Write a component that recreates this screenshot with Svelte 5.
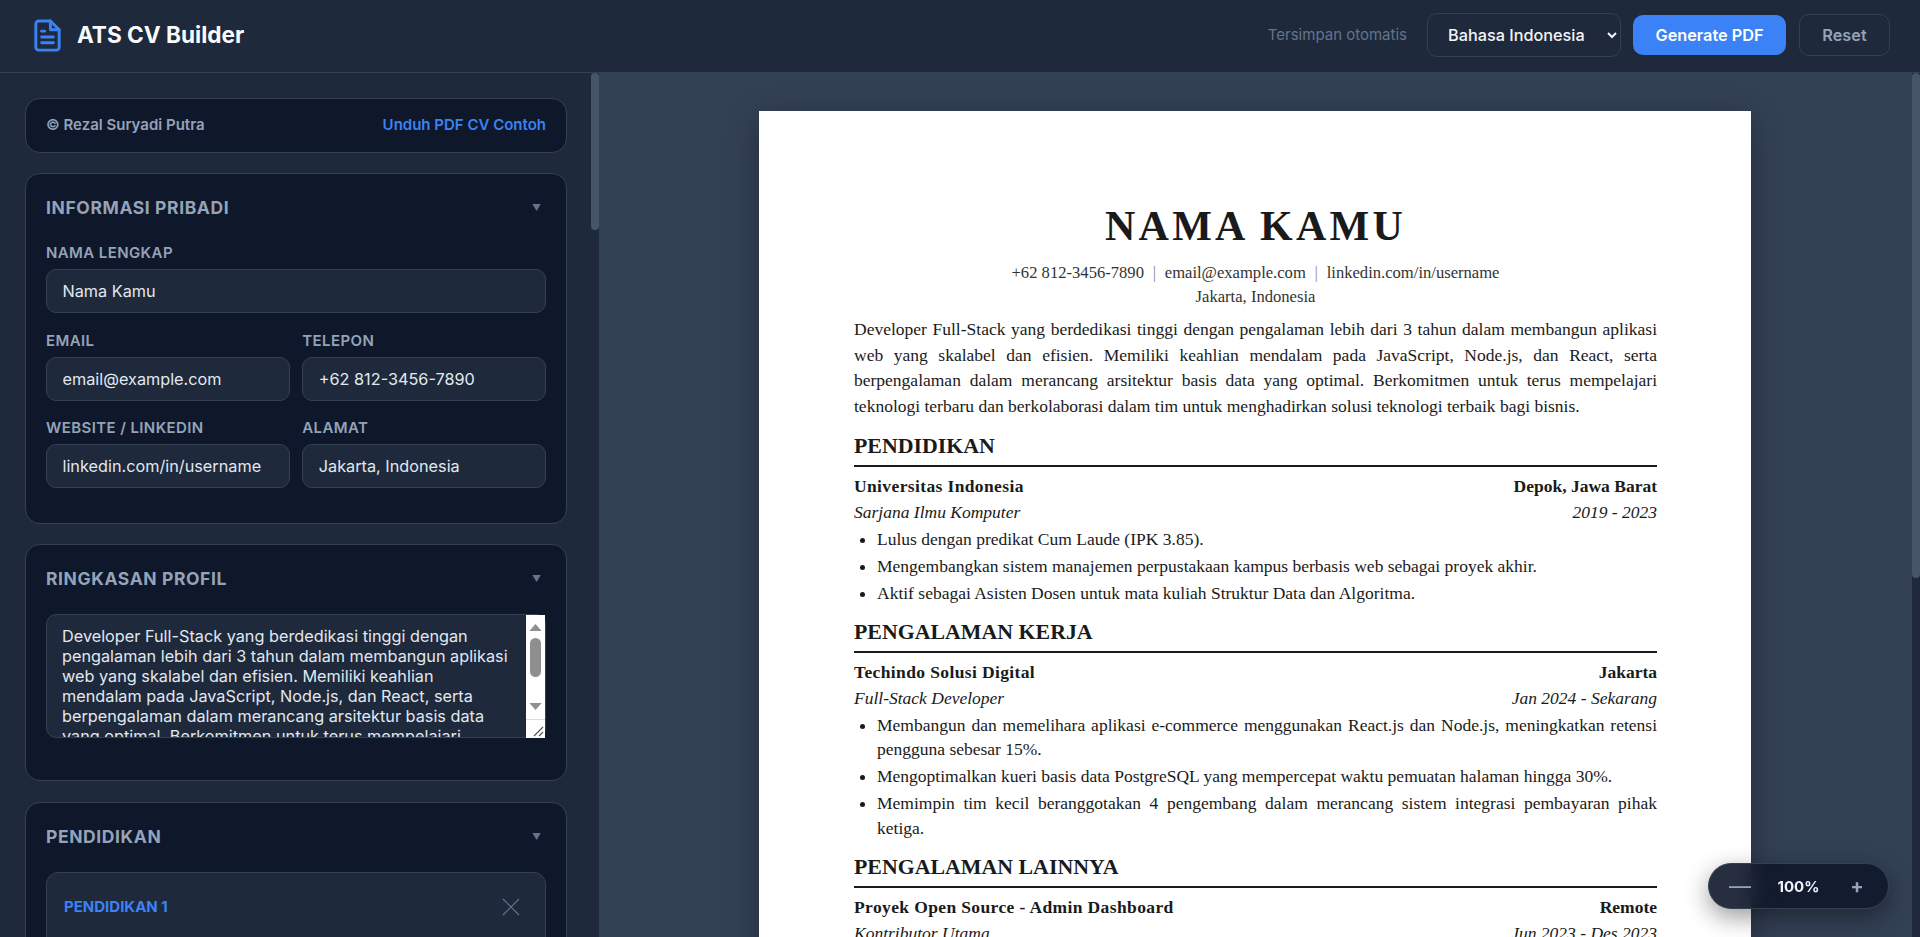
<script>
  const summary =
    'Developer Full-Stack yang berdedikasi tinggi dengan pengalaman lebih dari 3 tahun dalam membangun aplikasi web yang skalabel dan efisien. Memiliki keahlian mendalam pada JavaScript, Node.js, dan React, serta berpengalaman dalam merancang arsitektur basis data yang optimal. Berkomitmen untuk terus mempelajari teknologi terbaru dan berkolaborasi dalam tim untuk menghadirkan solusi teknologi terbaik bagi bisnis.';

  let zoom = $state(100);
  let sideEl = $state();
  let mainEl = $state();
  let sideTop = $state(0);
  let mainTop = $state(0);

  // the page draws its own scrollbars, thumb follows the scroll position
  function thumbStyle(el, top) {
    if (!el) return '';
    const h = el.clientHeight;
    const size = (h * h) / el.scrollHeight;
    return `height: ${size}px; transform: translateY(${(top * h) / el.scrollHeight}px)`;
  }

  const education = [
    {
      title: 'Universitas Indonesia',
      place: 'Depok, Jawa Barat',
      role: 'Sarjana Ilmu Komputer',
      date: '2019 - 2023',
      points: [
        'Lulus dengan predikat Cum Laude (IPK 3.85).',
        'Mengembangkan sistem manajemen perpustakaan kampus berbasis web sebagai proyek akhir.',
        'Aktif sebagai Asisten Dosen untuk mata kuliah Struktur Data dan Algoritma.'
      ]
    }
  ];

  const work = [
    {
      title: 'Techindo Solusi Digital',
      place: 'Jakarta',
      role: 'Full-Stack Developer',
      date: 'Jan 2024 - Sekarang',
      points: [
        'Membangun dan memelihara aplikasi e-commerce menggunakan React.js dan Node.js, meningkatkan retensi pengguna sebesar 15%.',
        'Mengoptimalkan kueri basis data PostgreSQL yang mempercepat waktu pemuatan halaman hingga 30%.',
        'Memimpin tim kecil beranggotakan 4 pengembang dalam merancang sistem integrasi pembayaran pihak ketiga.'
      ]
    }
  ];

  const other = [
    {
      title: 'Proyek Open Source - Admin Dashboard',
      place: 'Remote',
      role: 'Kontributor Utama',
      date: 'Jun 2023 - Des 2023',
      points: [
        'Mengembangkan komponen antarmuka yang digunakan ulang oleh lebih dari 200 pengembang.',
        'Menulis dokumentasi teknis dan panduan kontribusi proyek.'
      ]
    }
  ];

  const sections = [
    { name: 'Pendidikan', items: education },
    { name: 'Pengalaman Kerja', items: work },
    { name: 'Pengalaman Lainnya', items: other }
  ];

  const formSections = [
    { name: 'Pendidikan', unit: 'Pendidikan', items: education },
    { name: 'Pengalaman Kerja', unit: 'Pengalaman', items: work },
    { name: 'Pengalaman Lainnya', unit: 'Kegiatan', items: other }
  ];
</script>

<div class="app">
  <header class="topbar">
    <div class="brand">
      <svg class="logo" viewBox="0 0 24 24" fill="none" stroke="currentColor" stroke-width="2" stroke-linecap="round" stroke-linejoin="round">
        <path d="M14 2H6a2 2 0 0 0-2 2v16a2 2 0 0 0 2 2h12a2 2 0 0 0 2-2V8z" />
        <path d="M14 2v6h6" />
        <path d="M16 13H8" />
        <path d="M16 17H8" />
        <path d="M10 9H8" />
      </svg>
      <h1>ATS CV Builder</h1>
    </div>
    <div class="actions">
      <span class="saved">Tersimpan otomatis</span>
      <select class="lang">
        <option>Bahasa Indonesia</option>
        <option>English</option>
      </select>
      <button type="button" class="btn-primary">Generate PDF</button>
      <button type="button" class="btn-ghost">Reset</button>
    </div>
  </header>

  <div class="workspace">
    <div class="pane side-pane">
      <aside class="sidebar" bind:this={sideEl} onscroll={() => (sideTop = sideEl.scrollTop)}>
        <div class="side-list">
          <div class="credit">
            <span>© Rezal Suryadi Putra</span>
            <a href="#contoh">Unduh PDF CV Contoh</a>
          </div>

          <section class="card">
            <div class="card-head">
              <h2>Informasi Pribadi</h2>
              <span class="caret">▼</span>
            </div>
            <div class="field">
              <label for="name">Nama Lengkap</label>
              <input id="name" value="Nama Kamu" />
            </div>
            <div class="two">
              <div class="field">
                <label for="email">Email</label>
                <input id="email" value="email@example.com" />
              </div>
              <div class="field">
                <label for="phone">Telepon</label>
                <input id="phone" value="+62 812-3456-7890" />
              </div>
            </div>
            <div class="two">
              <div class="field">
                <label for="web">Website / LinkedIn</label>
                <input id="web" value="linkedin.com/in/username" />
              </div>
              <div class="field">
                <label for="addr">Alamat</label>
                <input id="addr" value="Jakarta, Indonesia" />
              </div>
            </div>
          </section>

          <section class="card">
            <div class="card-head">
              <h2>Ringkasan Profil</h2>
              <span class="caret">▼</span>
            </div>
            <div class="ta-wrap">
              <textarea aria-label="Ringkasan" value={summary}></textarea>
              <div class="ta-bar">
                <svg class="ta-arrow" viewBox="0 0 14 8"><path d="M7 0l7 8H0z" /></svg>
                <div class="ta-thumb"></div>
                <svg class="ta-arrow down" viewBox="0 0 14 8"><path d="M0 0h14L7 8z" /></svg>
                <div class="ta-corner">
                  <svg viewBox="0 0 12 12" fill="none" stroke="#555" stroke-width="1.2">
                    <path d="M2 11L11 2M7 11l4-4" />
                  </svg>
                </div>
              </div>
            </div>
          </section>

          {#each formSections as sec}
            <section class="card">
              <div class="card-head">
                <h2>{sec.name}</h2>
                <span class="caret">▼</span>
              </div>
              {#each sec.items as item, i}
                <div class="entry">
                  <div class="entry-head">
                    <span>{sec.unit} {i + 1}</span>
                    <button type="button" class="remove" aria-label="Hapus">
                      <svg viewBox="0 0 18 18" fill="none" stroke="currentColor" stroke-width="1.2">
                        <path d="M1 1l16 16M17 1L1 17" />
                      </svg>
                    </button>
                  </div>
                  <div class="field">
                    <label for="t{sec.unit}{i}">Nama</label>
                    <input id="t{sec.unit}{i}" value={item.title} />
                  </div>
                  <div class="two">
                    <div class="field">
                      <label for="r{sec.unit}{i}">Peran</label>
                      <input id="r{sec.unit}{i}" value={item.role} />
                    </div>
                    <div class="field">
                      <label for="p{sec.unit}{i}">Lokasi</label>
                      <input id="p{sec.unit}{i}" value={item.place} />
                    </div>
                  </div>
                  <div class="field">
                    <label for="d{sec.unit}{i}">Periode</label>
                    <input id="d{sec.unit}{i}" value={item.date} />
                  </div>
                </div>
              {/each}
            </section>
          {/each}
        </div>
      </aside>
      <div class="rail"><div class="thumb" style={thumbStyle(sideEl, sideTop)}></div></div>
    </div>

    <div class="pane main-pane">
      <main class="preview" bind:this={mainEl} onscroll={() => (mainTop = mainEl.scrollTop)}>
        <article class="paper">
          <h1 class="cv-name">NAMA KAMU</h1>
          <p class="cv-contact">
            +62 812-3456-7890<span class="sep">|</span>email@example.com<span class="sep">|</span>linkedin.com/in/username<br />Jakarta, Indonesia
          </p>
          <p class="cv-summary">{summary}</p>

          {#each sections as sec}
            <h2 class="cv-heading">{sec.name}</h2>
            {#each sec.items as item}
              <div class="cv-row cv-strong">
                <span class="cv-title">{item.title}</span><span>{item.place}</span>
              </div>
              <div class="cv-row cv-italic">
                <span>{item.role}</span><span>{item.date}</span>
              </div>
              <ul>
                {#each item.points as point}
                  <li>{point}</li>
                {/each}
              </ul>
            {/each}
          {/each}
        </article>
      </main>
      <div class="rail"><div class="thumb" style={thumbStyle(mainEl, mainTop)}></div></div>
    </div>
  </div>

  <div class="zoombar">
    <button type="button" class="zoom-btn minus" onclick={() => (zoom -= 10)}>—</button>
    <span class="zoom-val">{zoom}%</span>
    <button type="button" class="zoom-btn" onclick={() => (zoom += 10)}>+</button>
  </div>
</div>

<style>
  :global(body) {
    margin: 0;
    background: #1e293b;
    font-family: Inter, "Liberation Sans", sans-serif;
    overflow: hidden;
  }

  .app {
    height: 100vh;
    display: flex;
    flex-direction: column;
  }

  .topbar {
    flex: none;
    height: 73px;
    box-sizing: border-box;
    border-bottom: 1px solid #334155;
    background: #1e293b;
    display: flex;
    align-items: center;
    justify-content: space-between;
    padding: 0 30px 2px;
  }

  .brand {
    display: flex;
    align-items: center;
    gap: 12px;
  }

  .logo {
    width: 35px;
    height: 35px;
    color: #3b82f6;
  }

  .brand h1 {
    margin: 0 0 2px;
    font-size: 22.6px;
    font-weight: 700;
    color: #f8fafc;
  }

  .actions {
    display: flex;
    align-items: center;
    gap: 12px;
  }

  .saved {
    font-size: 15px;
    color: #64748b;
    margin: 0 8px 2px 0;
  }

  .lang {
    width: 194px;
    height: 44px;
    padding: 0 5px 0 16px;
    background: #1e293b;
    border: 1px solid #334155;
    border-radius: 10px;
    color: #f1f5f9;
    font-family: inherit;
    font-size: 16.25px;
    font-weight: 500;
  }

  .btn-primary {
    width: 153px;
    height: 40px;
    border: none;
    border-radius: 10px;
    background: #3b82f6;
    color: #fff;
    font-family: inherit;
    font-size: 16.25px;
    font-weight: 600;
  }

  .btn-ghost {
    width: 91px;
    height: 42px;
    margin-left: 1px;
    border: 1px solid #334155;
    border-radius: 10px;
    background: transparent;
    color: #94a3b8;
    font-family: inherit;
    font-size: 16.25px;
    font-weight: 600;
  }

  .workspace {
    flex: 1;
    min-height: 0;
    display: flex;
  }

  .pane {
    display: flex;
    min-width: 0;
  }

  .side-pane {
    flex: none;
    width: 599px;
  }

  .main-pane {
    flex: 1;
  }

  .rail {
    flex: none;
    width: 8px;
    background: #1e293b;
  }

  .thumb {
    background: #475569;
    border-radius: 5px;
  }

  .sidebar,
  .preview {
    flex: 1;
    min-width: 0;
    overflow-y: auto;
  }

  .sidebar {
    background: #1e293b;
  }

  .side-list {
    min-height: 4716px;
    padding: 25px 24px 25px 25px;
    display: flex;
    flex-direction: column;
    gap: 20.6px;
  }

  .credit {
    flex: none;
    height: 54.5px;
    box-sizing: border-box;
    display: flex;
    align-items: center;
    justify-content: space-between;
    padding: 0 20px 2px;
    background: #0f172a;
    border: 1px solid #334155;
    border-radius: 15px;
    font-size: 15px;
    font-weight: 600;
    color: #94a3b8;
  }

  .credit a {
    color: #3b82f6;
    text-decoration: none;
  }

  .card {
    flex: none;
    background: #0f172a;
    border: 1px solid #334155;
    border-radius: 15px;
    padding: 18.5px 20px 17px;
  }

  .card-head {
    display: flex;
    align-items: center;
    justify-content: space-between;
    height: 30px;
    margin-bottom: 20.5px;
  }

  .card-head h2 {
    margin: 0;
    font-size: 17.5px;
    font-weight: 700;
    text-transform: uppercase;
    letter-spacing: 0.6px;
    color: #94a3b8;
  }

  .caret {
    font-size: 9px;
    color: #64748b;
    margin-right: 5px;
  }

  .field {
    min-width: 0;
    margin-bottom: 17.5px;
  }

  label {
    display: block;
    margin-bottom: 7px;
    font-size: 15px;
    font-weight: 600;
    text-transform: uppercase;
    letter-spacing: 0.4px;
    color: #94a3b8;
  }

  input,
  textarea {
    display: block;
    width: 100%;
    box-sizing: border-box;
    background: #1e293b;
    border: 1px solid #334155;
    border-radius: 10px;
    color: #e2e8f0;
    font-family: inherit;
    outline: none;
  }

  input {
    height: 44px;
    padding: 0 15.5px;
    font-size: 16.25px;
  }

  .ta-wrap {
    position: relative;
    margin-bottom: 25px;
  }

  textarea {
    height: 124px;
    padding: 11px 34px 0 15px;
    font-size: 16.25px;
    line-height: 20px;
    overflow: hidden;
    resize: none;
  }

  .ta-bar {
    position: absolute;
    top: 1px;
    right: 1px;
    bottom: 0;
    width: 19px;
    background: #fff;
    display: flex;
    flex-direction: column;
    align-items: center;
  }

  .ta-arrow {
    flex: none;
    width: 13px;
    height: 7px;
    margin-top: 9px;
    fill: #8f8f8f;
  }

  .ta-arrow.down {
    margin-top: 26px;
  }

  .ta-thumb {
    flex: none;
    width: 11px;
    height: 39px;
    margin-top: 7px;
    background: #8f8f8f;
    border-radius: 6px;
  }

  .ta-corner {
    flex: none;
    width: 100%;
    height: 19px;
    margin-top: auto;
    box-sizing: border-box;
    border-top: 1px solid #ddd;
  }

  .ta-corner svg {
    display: block;
    width: 12px;
    height: 12px;
    margin: 5px 0 0 6px;
  }

  .two {
    display: grid;
    grid-template-columns: 1fr 1fr;
    gap: 12.5px;
  }

  .entry {
    margin-top: 21px;
    background: #1e293b;
    border: 1px solid #334155;
    border-radius: 12px;
    padding: 15px 17px 18px;
  }

  .entry-head {
    display: flex;
    align-items: center;
    justify-content: space-between;
    margin-bottom: 15px;
    font-size: 15px;
    font-weight: 700;
    text-transform: uppercase;
    color: #3b82f6;
  }

  .remove {
    width: 34px;
    height: 34px;
    padding: 8px;
    border: none;
    background: none;
    color: #64748b;
    margin-top: 2px;
  }

  .preview {
    background: #334155;
    padding: 38px 1px 38px 0;
    box-sizing: border-box;
  }

  .paper {
    width: 992px;
    min-height: 1403px;
    box-sizing: border-box;
    margin: 0 auto;
    padding: 89px 94px 95px 95px;
    background: #fff;
    box-shadow: 0 8px 30px rgba(0, 0, 0, 0.3);
    font-family: "Liberation Serif", "Times New Roman", serif;
    font-size: 17.5px;
    color: #1a1a1a;
  }

  .cv-name {
    margin: 0;
    text-align: center;
    font-size: 42px;
    font-weight: 700;
    letter-spacing: 3.25px;
    line-height: 52px;
  }

  .cv-contact {
    margin: 9px 0 0;
    text-align: center;
    font-size: 16.6px;
    line-height: 24px;
    color: #333;
  }

  .sep {
    margin: 0 8.75px;
    color: #888;
  }

  .cv-summary {
    margin: 8px 0 14.5px;
    text-align: justify;
    line-height: 25.5px;
  }

  .cv-heading {
    margin: 14.5px 0 6px;
    padding-bottom: 6px;
    border-bottom: 2px solid #1a1a1a;
    font-size: 21.875px;
    font-weight: 700;
    text-transform: uppercase;
    line-height: 25px;
  }

  .cv-row {
    display: flex;
    justify-content: space-between;
    line-height: 26px;
  }

  .cv-strong {
    font-weight: 700;
  }

  .cv-title {
    letter-spacing: 0.375px;
  }

  .cv-italic {
    font-style: italic;
  }

  ul {
    margin: 2px 0 0;
    padding-left: 23px;
  }

  li {
    text-align: justify;
    line-height: 24.7px;
    margin-bottom: 2.3px;
  }

  .zoombar {
    position: fixed;
    right: 31px;
    bottom: 28px;
    width: 181px;
    height: 46px;
    box-sizing: border-box;
    display: flex;
    align-items: center;
    justify-content: space-between;
    padding: 0 14px;
    border: 1px solid #334155;
    border-radius: 23px;
    background: rgba(15, 23, 42, 0.9);
    backdrop-filter: blur(10px);
    box-shadow: 0 8px 24px rgba(0, 0, 0, 0.4);
  }

  .zoom-btn {
    width: 34px;
    border: none;
    background: none;
    padding: 0;
    color: #94a3b8;
    font-family: inherit;
    font-size: 20px;
    font-weight: 700;
  }

  .zoom-btn.minus {
    font-weight: 400;
    font-size: 22px;
  }

  .zoom-val {
    color: #f1f5f9;
    font-size: 15px;
    font-weight: 700;
  }
</style>
